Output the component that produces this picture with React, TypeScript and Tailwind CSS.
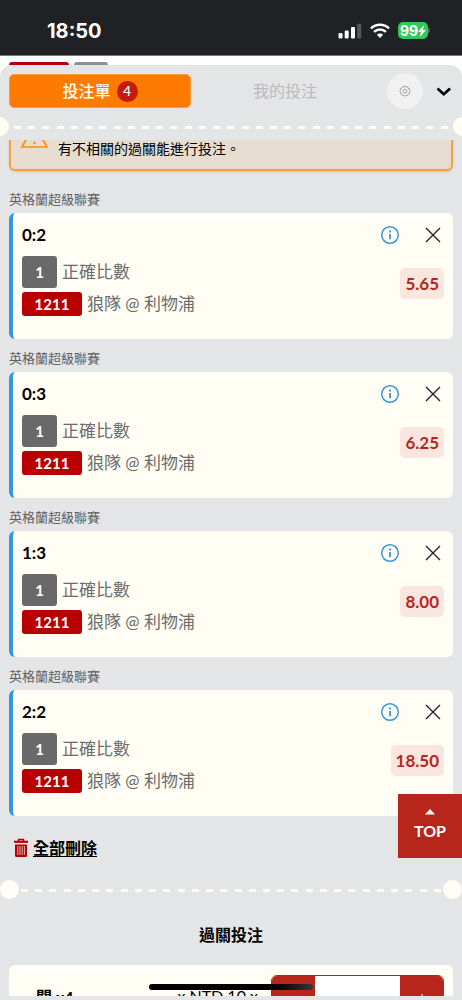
import type { ReactNode } from "react";

const bets = [
  { score: "0:2", odds: "5.65" },
  { score: "0:3", odds: "6.25" },
  { score: "1:3", odds: "8.00" },
  { score: "2:2", odds: "18.50" },
];

function StatusBar() {
  return (
    <div className="flex h-14 shrink-0 items-center justify-between border-b border-[#77787b] bg-[#202125] pt-[6px] pr-8 pl-[47px] text-white">
      <span className="font-['Inter',sans-serif] text-xl leading-6 font-bold">
        18:50
      </span>
      <div className="flex items-center">
        {/* signal */}
        <svg width="24" height="16" viewBox="0 0 24 16" fill="currentColor">
          <rect x="0.5" y="10" width="4" height="5.5" rx="1.2" />
          <rect x="6.7" y="7.5" width="4" height="8" rx="1.2" />
          <rect x="13" y="4" width="4" height="11.5" rx="1.2" />
          <rect x="19.2" y="0.8" width="4" height="14.7" rx="1.2" opacity="0.25" />
        </svg>
        {/* wifi */}
        <svg className="ml-2" width="20" height="16" viewBox="0 0 20 16" fill="none" stroke="currentColor" strokeWidth="2.5">
          <path d="M1 5.4a13 13 0 0 1 18 0" />
          <path d="M4.1 8.8a8.6 8.6 0 0 1 11.8 0" />
          <path d="M6.9 11.8a4.6 4.6 0 0 1 6.2 0L10 15z" fill="currentColor" stroke="none" />
        </svg>
        {/* battery */}
        <div className="ml-2 flex h-[17px] w-[30px] items-center justify-center rounded-[5px] bg-[#34c759]">
          <span className="font-['Inter',sans-serif] text-sm leading-4 font-bold">
            99
          </span>
          <svg width="8" height="12" viewBox="0 0 8 12" fill="currentColor">
            <path d="M6.2 0 0 6.8h3L1.8 12l6.1-7.1H4.8z" />
          </svg>
        </div>
        <span className="h-[5px] w-[2px] rounded-r bg-[#5c5d60]" />
      </div>
    </div>
  );
}

function Dashes({ count }: { count: number }) {
  return (
    <div className="flex flex-1 justify-between pt-px">
      {Array.from({ length: count }, (_, i) => (
        <span key={i} className="h-[3px] w-[7px] bg-[#fffdf4]" />
      ))}
    </div>
  );
}

function Divider({ count, edge }: { count: number; edge?: boolean }) {
  const dot = "size-[19px] shrink-0 rounded-full bg-[#fffdf4]";
  return (
    <div className={edge ? "-mx-[10px] flex items-center gap-[5px]" : "flex items-center gap-[2px]"}>
      <span className={dot} />
      <Dashes count={count} />
      <span className={dot} />
    </div>
  );
}

function Tag({ className, children }: { className: string; children: ReactNode }) {
  return (
    <span
      className={`flex items-center justify-center rounded-[3px] text-[15px] leading-5 font-bold text-white ${className}`}
    >
      {children}
    </span>
  );
}

function BetCard({ score, odds }: { score: string; odds: string }) {
  return (
    <section>
      <h3 className="flex h-[33px] items-center pt-1 text-[13px] leading-5 text-[#606163]">
        英格蘭超級聯賽
      </h3>
      <div className="flex h-[126px] justify-between rounded-md border-l-4 border-[#3498db] bg-[#fffdf4] pr-[9px] pl-[9px]">
        <div className="pt-[10px]">
          <div className="text-[17px] leading-6 font-bold text-black">{score}</div>
          <div className="mt-[9px] flex items-center gap-[5px] text-[17px] text-[#6c6c6c]">
            <Tag className="h-8 w-[35px] bg-[#696969]">1</Tag>
            正確比數
          </div>
          <div className="mt-1 flex h-6 items-center gap-[5px] text-[17px] text-[#6c6c6c]">
            <Tag className="h-6 w-[60px] bg-[#b90000]">1211</Tag>
            狼隊 @ 利物浦
          </div>
        </div>
        <div className="flex flex-col items-end pt-3">
          <div className="flex items-center gap-[23px]">
            <button type="button" aria-label="資訊" className="text-[#3498db]">
              <svg width="20" height="20" viewBox="0 0 20 20" fill="none" stroke="currentColor" strokeWidth="1.5">
                <circle cx="10" cy="10" r="8.3" />
                <path d="M10 9v5.2" strokeWidth="1.8" />
                <path d="M10 5.6v1.8" strokeWidth="1.8" />
              </svg>
            </button>
            <button type="button" aria-label="移除" className="mr-px text-[#222]">
              <svg width="20" height="20" viewBox="0 0 20 20" fill="none" stroke="currentColor" strokeWidth="1.4">
                <path d="M3 3l14 14M17 3 3 17" />
              </svg>
            </button>
          </div>
          <div className="mt-[23px] rounded-[5px] bg-[#f8e6df] px-[5px] text-[17px] leading-[31px] font-bold text-[#b8261b]">
            {odds}
          </div>
        </div>
      </div>
    </section>
  );
}

export default function App() {
  return (
    <main className="relative flex h-screen flex-col overflow-hidden bg-white font-['Lato','Noto_Sans_CJK_TC',sans-serif]">
      <StatusBar />

      {/* page tabs behind the slip */}
      <div className="flex h-[9px] shrink-0 items-end gap-[5px] px-[9px]">
        <span className="h-[3px] w-[60px] rounded-t-sm bg-[#b5000b]" />
        <span className="h-[3px] w-[34px] rounded-t-sm bg-[#8f8f8f]" />
      </div>

      <div className="flex min-h-0 flex-1 flex-col overflow-hidden rounded-t-xl bg-[#e4e5e7] pb-1">
        {/* Header */}
        <header className="flex shrink-0 items-center px-[9px] pt-2">
          <button
            type="button"
            className="flex h-[34px] flex-1 items-center justify-center gap-[6px] rounded-[5px] border border-[#ff9a3d] bg-[#ff7a00] text-base font-medium text-white"
          >
            投注單
            <span className="flex size-[21px] items-center justify-center rounded-full bg-[#c41a10] text-sm">
              4
            </span>
          </button>
          <button type="button" className="flex-1 pl-1 text-base text-[#b9babc]">
            我的投注
          </button>
          <button
            type="button"
            aria-label="設定"
            className="ml-3 flex size-9 items-center justify-center rounded-full bg-[#f1f1f1] text-[#999]"
          >
            <svg width="12" height="12" viewBox="0 0 12 12" fill="none" stroke="currentColor">
              <path d="M6 1l1.1 1L8.6 1.8l.5 1.4 1.5.5-.2 1.5 1 .9-1 1 .2 1.6-1.5.4-.5 1.4-1.5-.2L6 11.4l-1.1-1.1-1.5.2-.5-1.4-1.5-.4.2-1.6-1-1 1-.9-.2-1.5 1.5-.5.5-1.4 1.5.2z" strokeWidth="0.9" />
              <circle cx="6" cy="6.1" r="1.9" strokeWidth="0.9" />
            </svg>
          </button>
          <button type="button" aria-label="收合" className="ml-[13px] text-black">
            <svg width="17" height="16" viewBox="0 0 17 16" fill="none" stroke="currentColor" strokeWidth="2.6">
              <path d="M1.5 5.5l6.3 5.8 6.3-5.8" />
            </svg>
          </button>
        </header>

        <div className="mt-2 shrink-0">
          <Divider count={31} edge />
        </div>

        {/* Scroll area */}
        <div className="mt-1 min-h-0 flex-1 overflow-hidden">
          <div className="px-[9px]">
            <div className="-mt-5 flex h-[51px] items-end gap-[9px] rounded-md border-2 border-[#f3a340] bg-[#e6dcd0] pb-2 pl-[9px] text-sm leading-6 text-black shadow">
              <svg className="mb-3" width="29" height="26" viewBox="0 0 29 26" fill="none" stroke="#ff8c0a" strokeWidth="1.7">
                <path d="M14.5 1 27 24H2z" />
                <path d="M14.5 9v6" />
                <circle cx="14.5" cy="20" r="1.3" fill="#ff8c0a" stroke="none" />
              </svg>
              有不相關的過關能進行投注。
            </div>

            <div className="pt-[9px]">
              {bets.map((bet) => (
                <BetCard key={bet.score} score={bet.score} odds={bet.odds} />
              ))}
            </div>

            <button
              type="button"
              className="mt-5 ml-1 flex items-center gap-1 text-base font-bold text-black"
            >
              <svg width="16" height="20" viewBox="0 0 16 20" fill="none" stroke="#b90000">
                <path d="M5.5 3V1.5h5V3" strokeWidth="1.4" />
                <path d="M1 3.8h14" strokeWidth="2.2" />
                <path d="M2 6.5h12v11.2q0 1.3-1.3 1.3H3.3Q2 19 2 17.7z" fill="#b90000" stroke="none" />
                <path d="M4.8 8v9M7 8v9M9.2 8v9M11.4 8v9" stroke="#e4e5e7" strokeWidth="0.8" />
              </svg>
              <span className="underline underline-offset-2">全部刪除</span>
            </button>
          </div>

          <div className="mt-5">
            <Divider count={30} />
          </div>

          <h2 className="mt-6 text-center text-base leading-6 font-bold text-black">
            過關投注
          </h2>

          <div className="mx-[9px] mt-[18px] flex h-20 items-start justify-between rounded-md bg-[#fffdf4] pr-[9px] pl-[27px] text-base text-black">
            <label htmlFor="stake" className="pt-5 font-bold">
              關 x4
            </label>
            <span className="ml-auto pt-[19px]">x NTD 10 x</span>
            <div className="mt-[10px] ml-[13px] flex h-11 w-[173px] overflow-hidden rounded-md border border-[#b8261b]">
              <button type="button" aria-label="減少" className="w-[43px] bg-[#b8261b]" />
              <input id="stake" className="min-w-0 flex-1 bg-white px-2" />
              <button type="button" aria-label="增加" className="flex w-[43px] justify-center bg-[#b8261b] pt-[17px]">
                <svg width="14" height="14" viewBox="0 0 14 14" stroke="#fff" strokeWidth="1">
                  <path d="M7 1v12M1 7h12" />
                </svg>
              </button>
            </div>
          </div>
        </div>
      </div>

      {/* Back to top */}
      <button
        type="button"
        className="absolute right-0 bottom-[142px] flex size-16 flex-col items-center justify-center bg-[#b8261b] text-base leading-6 font-bold text-white"
      >
        <svg width="10" height="6" viewBox="0 0 10 6" fill="currentColor">
          <path d="M0 5.5 5 0l5 5.5z" />
        </svg>
        <span className="mt-1">TOP</span>
      </button>

      {/* Home indicator */}
      <div className="absolute bottom-[10px] left-1/2 h-[6px] w-[164px] -translate-x-1/2 rounded-full bg-linear-to-r from-black from-70% to-[#3a3a3a]" />
    </main>
  );
}
